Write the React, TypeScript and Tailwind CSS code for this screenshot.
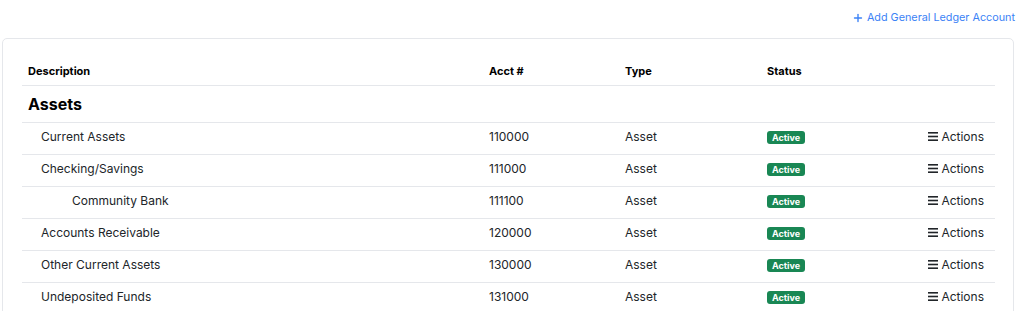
import { Plus } from 'lucide-react';

interface Row {
  name: string;
  acct: string;
  type: string;
  level: 1 | 2;
}

const rows: Row[] = [
  { name: 'Current Assets', acct: '110000', type: 'Asset', level: 1 },
  { name: 'Checking/Savings', acct: '111000', type: 'Asset', level: 1 },
  { name: 'Community Bank', acct: '111100', type: 'Asset', level: 2 },
  { name: 'Accounts Receivable', acct: '120000', type: 'Asset', level: 1 },
  { name: 'Other Current Assets', acct: '130000', type: 'Asset', level: 1 },
  { name: 'Undeposited Funds', acct: '131000', type: 'Asset', level: 1 },
];

function MenuIcon() {
  return (
    <svg width="10" height="9" viewBox="0 0 10 9" className="mr-[3px]">
      <rect x="0" y="0" width="10" height="1.6" fill="#212529" />
      <rect x="0" y="3.7" width="10" height="1.6" fill="#212529" />
      <rect x="0" y="7.4" width="10" height="1.6" fill="#212529" />
    </svg>
  );
}

export default function App() {
  return (
    <div className="w-[1024px] h-[311px] overflow-hidden bg-white pl-[2px] pr-[10px] text-[#212529] font-['Inter',sans-serif]">
      <div className="flex justify-end h-[38px] items-center pb-[2px]">
        <button className="flex items-center gap-[3px] text-[10.8px] text-[#3b82f6] mr-[-1px]">
          <Plus size={12} strokeWidth={2.75} />
          Add General Ledger Account
        </button>
      </div>

      <div className="border border-[#e5e7eb] rounded-[5px] pl-[19px] pr-[18px] pt-[19px] pb-4 h-[400px]">
        <table className="w-full border-collapse text-[12px]">
          <thead>
            <tr className="border-b border-[#e5e7eb]">
              <th className="text-left font-bold text-[11px] text-black px-1.5 h-[27px] w-[461px]">Description</th>
              <th className="text-left font-bold text-[11px] text-black px-1.5 w-[136px]">Acct #</th>
              <th className="text-left font-bold text-[11px] text-black px-1.5 w-[142px]">Type</th>
              <th className="text-left font-bold text-[11px] text-black px-1.5">Status</th>
              <th className="px-1.5" />
            </tr>
          </thead>
          <tbody>
            <tr className="border-b border-[#e5e7eb]">
              <td colSpan={5} className="px-1.5 h-[37px] text-[16px] font-bold text-black">Assets</td>
            </tr>
            {rows.map(r => (
              <tr key={r.acct} className="border-b border-[#e5e7eb]">
                <td className={`h-[32px] pb-[2px] pr-1.5 ${r.level === 2 ? 'pl-[50px]' : 'pl-[19px]'}`}>{r.name}</td>
                <td className="px-1.5 pb-[2px]">{r.acct}</td>
                <td className="px-1.5 pb-[2px]">{r.type}</td>
                <td className="px-1.5 pb-[2px]">
                  <span className="inline-block bg-[#198754] text-white text-[9px] font-bold leading-[13px] px-[5px] rounded-[3px]">
                    Active
                  </span>
                </td>
                <td className="pr-[11px] pb-[2px] text-right">
                  <span className="inline-flex items-center">
                    <MenuIcon />
                    Actions
                  </span>
                </td>
              </tr>
            ))}
          </tbody>
        </table>
      </div>
    </div>
  );
}
